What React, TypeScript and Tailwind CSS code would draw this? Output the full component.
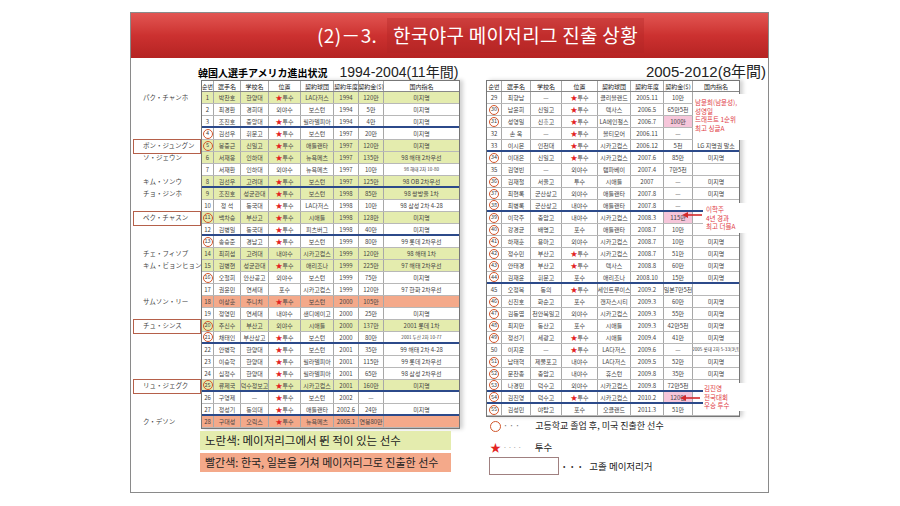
import React from "react";

type Row = {
  n: string;
  name: string;
  school: string;
  pos: string;
  team: string;
  year: string;
  money: string;
  draft: string;
  bg?: "y" | "s";
  c?: boolean;
  pink?: boolean;
  line?: boolean;
};

const r = (
  n: string, name: string, school: string, pos: string, team: string,
  year: string, money: string, draft: string, opts: Partial<Row> = {}
): Row => ({ n, name, school, pos, team, year, money, draft, ...opts });

const leftRows: Row[] = [
  r("1", "박찬호", "한양대", "★투수", "LA다저스", "1994", "120만", "미지명", { bg: "y" }),
  r("2", "최경환", "경희대", "외야수", "보스턴", "1994", "5만", "미지명"),
  r("3", "조진호", "중앙대", "★투수", "필라델피아", "1994", "4만", "미지명", { line: true }),
  r("4", "김선우", "휘문고", "★투수", "보스턴", "1997", "20만", "미지명", { c: true }),
  r("5", "봉중근", "신일고", "★투수", "애틀랜타", "1997", "120만", "미지명", { bg: "y", c: true }),
  r("6", "서재응", "인하대", "★투수", "뉴욕메츠", "1997", "135만", "98 해태 2차우선", { bg: "y" }),
  r("7", "서재환", "인하대", "외야수", "뉴욕메츠", "1997", "10만", "98 해태 2차 10-80"),
  r("8", "김선우", "고려대", "★투수", "보스턴", "1997", "125만", "98 OB 2차우선", { bg: "y", line: true }),
  r("9", "조진호", "성균관대", "★투수", "보스턴", "1998", "85만", "98 쌍방울 1차", { bg: "y" }),
  r("10", "정 석", "동국대", "★투수", "LA다저스", "1998", "10만", "98 삼성 2차 4-28"),
  r("11", "백차승", "부산고", "★투수", "시애틀", "1998", "128만", "미지명", { bg: "y", c: true }),
  r("12", "김병일", "동국대", "★투수", "피츠버그", "1998", "40만", "미지명", { line: true }),
  r("13", "송승준", "경남고", "★투수", "보스턴", "1999", "80만", "99 롯데 2차우선", { c: true }),
  r("14", "최희섭", "고려대", "내야수", "시카고컵스", "1999", "120만", "98 해태 1차", { bg: "y" }),
  r("15", "김병현", "성균관대", "★투수", "애리조나", "1999", "225만", "97 해태 2차우선", { bg: "y" }),
  r("16", "오철희", "안산공고", "외야수", "보스턴", "1999", "75만", "미지명", { c: true }),
  r("17", "권윤민", "연세대", "포수", "시카고컵스", "1999", "120만", "97 한화 2차우선"),
  r("18", "이상훈", "주니치", "★투수", "보스턴", "2000", "105만", "", { bg: "s" }),
  r("19", "정영민", "연세대", "내야수", "샌디에이고", "2000", "25만", "미지명"),
  r("20", "추신수", "부산고", "외야수", "시애틀", "2000", "137만", "2001 롯데 1차", { bg: "y", c: true }),
  r("21", "채태인", "부산상고", "★투수", "보스턴", "2000", "80만", "2001 두산 2차 10-77", { c: true, line: true }),
  r("22", "안병학", "한양대", "★투수", "보스턴", "2001", "35만", "99 해태 2차 4-28"),
  r("23", "이승학", "한양대", "★투수", "필라델피아", "2001", "115만", "99 롯데 2차우선"),
  r("24", "심정수", "한양대", "★투수", "필라델피아", "2001", "65만", "98 삼성 2차우선"),
  r("25", "류제국", "덕수정보고", "★투수", "시카고컵스", "2001", "160만", "미지명", { bg: "y", c: true, line: true }),
  r("26", "구영제", "—", "★투수", "보스턴", "2002", "—", ""),
  r("27", "정성기", "동의대", "★투수", "애틀랜타", "2002.6", "24만", "미지명", { line: true }),
  r("28", "구대성", "오릭스", "★투수", "뉴욕메츠", "2005.1", "연봉80만", "", { bg: "s" }),
];

const rightRows: Row[] = [
  r("29", "최향남", "—", "★투수", "클리블랜드", "2005.11", "10만", ""),
  r("30", "남윤희", "신일고", "★투수", "텍사스", "2006.5", "65만5천", "", { c: true }),
  r("31", "성영일", "신흥고", "★투수", "LA에인절스", "2006.7", "100만", "", { c: true, pink: true }),
  r("32", "손 욱", "—", "★투수", "볼티모어", "2006.11", "—", ""),
  r("33", "이시몬", "인천대", "★투수", "시카고컵스", "2006.12", "5천", "LG 지명권 말소", { line: true }),
  r("34", "이대은", "신일고", "★투수", "시카고컵스", "2007.6", "85만", "미지명", { c: true }),
  r("35", "김영빈", "—", "외야수", "탬파베이", "2007.4", "7만5천", ""),
  r("36", "김재철", "서울고", "투수", "시애틀", "2007", "—", "미지명", { c: true }),
  r("37", "최현록", "군산상고", "외야수", "애틀랜타", "2007.8", "—", "미지명", { c: true }),
  r("38", "최병록", "군산상고", "내야수", "애틀랜타", "2007.8", "—", "", { c: true, line: true }),
  r("39", "이학주", "충암고", "내야수", "시카고컵스", "2008.3", "115만", "", { c: true, pink: true }),
  r("40", "강경균", "배명고", "포수", "애틀랜타", "2008.7", "10만", "", { c: true }),
  r("41", "하재훈", "용마고", "외야수", "시카고컵스", "2008.7", "10만", "미지명", { c: true }),
  r("42", "정수민", "부산고", "★투수", "시카고컵스", "2008.7", "51만", "미지명", { c: true }),
  r("43", "안태경", "부산고", "★투수", "텍사스", "2008.8", "60만", "미지명", { c: true }),
  r("44", "김재윤", "휘문고", "포수", "애리조나", "2008.10", "15만", "미지명", { c: true, line: true }),
  r("45", "오정복", "동의", "★투수", "세인트루이스", "2009.2", "일본7만5천", ""),
  r("46", "신진호", "화순고", "포수", "캔자스시티", "2009.3", "60만", "미지명", { c: true }),
  r("47", "김동엽", "천안북일고", "외야수", "시카고컵스", "2009.3", "55만", "미지명", { c: true }),
  r("48", "최지만", "동산고", "포수", "시애틀", "2009.3", "42만5천", "미지명", { c: true }),
  r("49", "정선기", "세광고", "★투수", "시애틀", "2009.4", "41만", "미지명", { c: true }),
  r("50", "이지운", "—", "★투수", "LA다저스", "2009.6", "—", "2005 롯데 2차 5-33(3년)"),
  r("51", "남태혁", "제물포고", "내야수", "LA다저스", "2009.5", "52만", "미지명", { c: true }),
  r("52", "문찬종", "충암고", "내야수", "휴스턴", "2009.8", "35만", "미지명", { c: true }),
  r("53", "나경민", "덕수고", "외야수", "시카고컵스", "2009.8", "72만5천", "", { c: true, line: true }),
  r("54", "김진영", "덕수고", "★투수", "시카고컵스", "2010.2", "120만", "", { c: true, pink: true, line: true }),
  r("55", "김성민", "야탑고", "포수", "오클랜드", "2011.3", "51만", "", { c: true }),
];

const headers = ["순번", "選手名", "学校名", "位置", "契約球団", "契約年度", "契約金($)", "国内指名"];
const LW = ["w-[12px]", "w-[27px]", "w-[28px]", "w-[32px]", "w-[33px]", "w-[25px]", "w-[25px]", "w-[75px]"];
const RW = ["w-[15px]", "w-[29px]", "w-[31px]", "w-[36px]", "w-[33px]", "w-[33px]", "w-[29px]", "w-[46px]"];

const leftLabels: Record<number, { t: string; box?: boolean }> = {
  1: { t: "パク・チャンホ" },
  5: { t: "ボン・ジュングン", box: true },
  6: { t: "ソ・ジェウン" },
  8: { t: "キム・ソンウ" },
  9: { t: "チョ・ジンホ" },
  11: { t: "ペク・チャスン", box: true },
  14: { t: "チェ・フィソプ" },
  15: { t: "キム・ビョンヒョン" },
  18: { t: "サムソン・リー" },
  20: { t: "チュ・シンス", box: true },
  25: { t: "リュ・ジェグク", box: true },
  28: { t: "ク・デソン" },
};

function Pos({ v }: { v: string }) {
  if (!v.startsWith("★")) return <>{v}</>;
  return (
    <>
      <span className="text-[#e3241f] text-[7px]">★</span>
      {v.slice(1)}
    </>
  );
}

function TableRow({ row, widths }: { row: Row; widths: string[] }) {
  const bg = row.bg === "y" ? "bg-[#e4ecae]" : row.bg === "s" ? "bg-[#f4a98a]" : "bg-white";
  const border = row.line ? "border-b-2 border-[#2c4a8a]" : "border-b border-[#b8b8b8]";
  const vals = [row.n, row.name, row.school, row.pos, row.team, row.year, row.money, row.draft];
  return (
    <div className={`flex h-[12px] ${bg} ${border}`}>
      {vals.map((v, i) => (
        <div
          key={i}
          className={`${widths[i]} shrink-0 flex items-center justify-center whitespace-nowrap overflow-hidden text-[#444] ${v.length > 13 ? "text-[4.6px]" : "text-[6px]"} ${i < 7 ? "border-r border-[#a8a8a8]" : ""} ${i === 6 && row.pink ? "bg-[#f6c6da]" : ""}`}
        >
          {i === 0 && row.c ? (
            <span className="w-[10px] h-[10px] rounded-full border border-[#d4562b] flex items-center justify-center text-[5.5px]">
              {v}
            </span>
          ) : i === 3 ? (
            <Pos v={v} />
          ) : (
            v
          )}
        </div>
      ))}
    </div>
  );
}

function Table({ rows, widths }: { rows: Row[]; widths: string[] }) {
  return (
    <div className="border border-[#777] bg-white shadow-[3px_0_4px_rgba(0,0,0,0.18)]">
      <div className="flex h-[11px] border-b border-[#888]">
        {headers.map((h, i) => (
          <div
            key={h}
            className={`${widths[i]} shrink-0 flex items-center justify-center whitespace-nowrap text-[6px] text-[#222] ${i < 7 ? "border-r border-[#a8a8a8]" : ""}`}
          >
            {h}
          </div>
        ))}
      </div>
      {rows.map((row) => (
        <TableRow key={row.n} row={row} widths={widths} />
      ))}
    </div>
  );
}

function Arrow() {
  return (
    <svg width="20" height="6" viewBox="0 0 20 6">
      <line x1="5" y1="3" x2="20" y2="3" stroke="#d42a2a" strokeWidth="1.6" />
      <polygon points="0,3 6,0 6,6" fill="#d42a2a" />
    </svg>
  );
}

export default function App() {
  const kr = { fontFamily: '"Noto Sans CJK KR", "Noto Sans", sans-serif' };
  const jp = { fontFamily: '"Noto Sans CJK JP", "Noto Sans", sans-serif' };
  const lat = { fontFamily: '"Liberation Sans", "Noto Sans CJK JP", sans-serif' };

  return (
    <div className="w-[900px] h-[506px] bg-white overflow-hidden" style={kr}>
      <div className="ml-[130px] mt-[12px] w-[639px] h-[481px] border border-[#8a8a8a] flex flex-col">
        {/* 제목 바 */}
        <div className="h-[45px] shrink-0 bg-linear-to-b from-[#e25552] via-[#cc3130] to-[#b52322] flex items-center justify-center pl-[62px] text-white text-[19px] tracking-[0.3px]">
          <span className="mr-[10px]">(2)－3.</span>
          <span className="bg-[#b02424]/35 px-[6px] py-[3px]">한국야구 메이저리그 진출 상황</span>
        </div>

        <div className="flex flex-1">
          {/* 1994-2004 */}
          <div className="w-[355px] shrink-0 flex flex-col">
            <div className="h-[22px] pt-[6px] pl-[67px] flex items-end">
              <span className="text-[10px] font-bold text-black leading-[14px]" style={jp}>
                韓国人選手アメリカ進出状況
              </span>
              <span className="ml-[12px] text-[14px] text-[#222] leading-[16px]" style={lat}>
                1994-2004(11年間)
              </span>
            </div>
            <div className="flex">
              <div className="w-[70px] shrink-0 flex flex-col pt-[12px]" style={jp}>
                {leftRows.map((row, i) => {
                  const l = leftLabels[i + 1];
                  return (
                    <div key={row.n} className="h-[12px] flex items-center">
                      {l &&
                        (l.box ? (
                          <div className="ml-[2px] w-[68px] h-[15px] border border-[#b5604a] flex items-center pl-[9px] text-[6.5px] text-[#444] whitespace-nowrap">
                            {l.t}
                          </div>
                        ) : (
                          <div className="pl-[12px] text-[6.5px] text-[#444] whitespace-nowrap">{l.t}</div>
                        ))}
                    </div>
                  );
                })}
              </div>
              <div className="w-[259px] shrink-0">
                <Table rows={leftRows} widths={LW} />
              </div>
            </div>
            <div className="ml-[69px] mt-[2px] w-[251px] h-[19px] bg-[#e4ecae] flex items-center pl-[5px] text-[11.5px] text-[#222]">
              노란색: 메이저리그에서 뛴 적이 있는 선수
            </div>
            <div className="ml-[69px] mt-[3px] w-[251px] h-[19px] bg-[#f4a98a] flex items-center pl-[5px] text-[11px] text-[#222]">
              빨간색: 한국, 일본을 거쳐 메이저리그로 진출한 선수
            </div>
          </div>

          {/* 2005-2012 */}
          <div className="w-[281px] shrink-0 flex flex-col relative">
            <div className="h-[22px] pt-[6px] flex items-end justify-end pr-[1px]">
              <span className="text-[15px] text-[#222] leading-[16px]" style={lat}>
                2005-2012(8年間)
              </span>
            </div>
            <div className="w-[254px]">
              <Table rows={rightRows} widths={RW} />
            </div>

            <div className="mt-[2px] h-[14px] flex items-center pl-[4px] text-[9px] text-[#222]">
              <span className="w-[11px] h-[11px] rounded-full border-[1.5px] border-[#d0552a]" />
              <span className="ml-[2px] text-[#777] tracking-[1px]">···</span>
              <span className="ml-[14px]">고등학교 졸업 후, 미국 진출한 선수</span>
            </div>
            <div className="mt-[7px] h-[14px] flex items-center pl-[4px] text-[9.5px] text-[#222]">
              <span className="text-[#e3241f] text-[11px]">★</span>
              <span className="ml-[2px] text-[#999] text-[7px] tracking-[1px]">····</span>
              <span className="ml-[12px]">투수</span>
            </div>
            <div className="mt-[3px] h-[18px] flex items-center pl-[3px] text-[9.5px] text-[#222]">
              <span className="w-[70px] h-[18px] border border-[#a08080]" />
              <span className="ml-[4px] text-[7px] text-[#333] tracking-[2px]">• • •</span>
              <span className="ml-[6px]">고졸 메이저리거</span>
            </div>

            {/* 주석 */}
            <div className="absolute left-[207px] top-[36px] w-[56px] h-[46px] bg-white pt-[4px] pl-[2px] text-[6.5px] leading-[8.5px] text-[#e03a44]">
              <div>남윤희(남윤성),</div>
              <div>성영일</div>
              <div>드래프트 1순위</div>
              <div>최고 싱글A</div>
            </div>
            <div className="absolute left-[217px] top-[145px] w-[46px] h-[30px] bg-white pt-[2px] pl-[3px] text-[6.5px] leading-[8.5px] text-[#e03a44]">
              <div>이학주</div>
              <div>4년 경과</div>
              <div>최고 더블A</div>
            </div>
            <div className="absolute left-[196px] top-[154px]">
              <Arrow />
            </div>
            <div className="absolute left-[217px] top-[325px] w-[46px] h-[28px] bg-white pt-[1px] pl-[1px] text-[6.5px] leading-[8.5px] text-[#e03a44]">
              <div>김진영</div>
              <div>전국대회</div>
              <div>우승 투수</div>
            </div>
            <div className="absolute left-[194px] top-[337px]">
              <Arrow />
            </div>
          </div>
        </div>
      </div>
    </div>
  );
}
